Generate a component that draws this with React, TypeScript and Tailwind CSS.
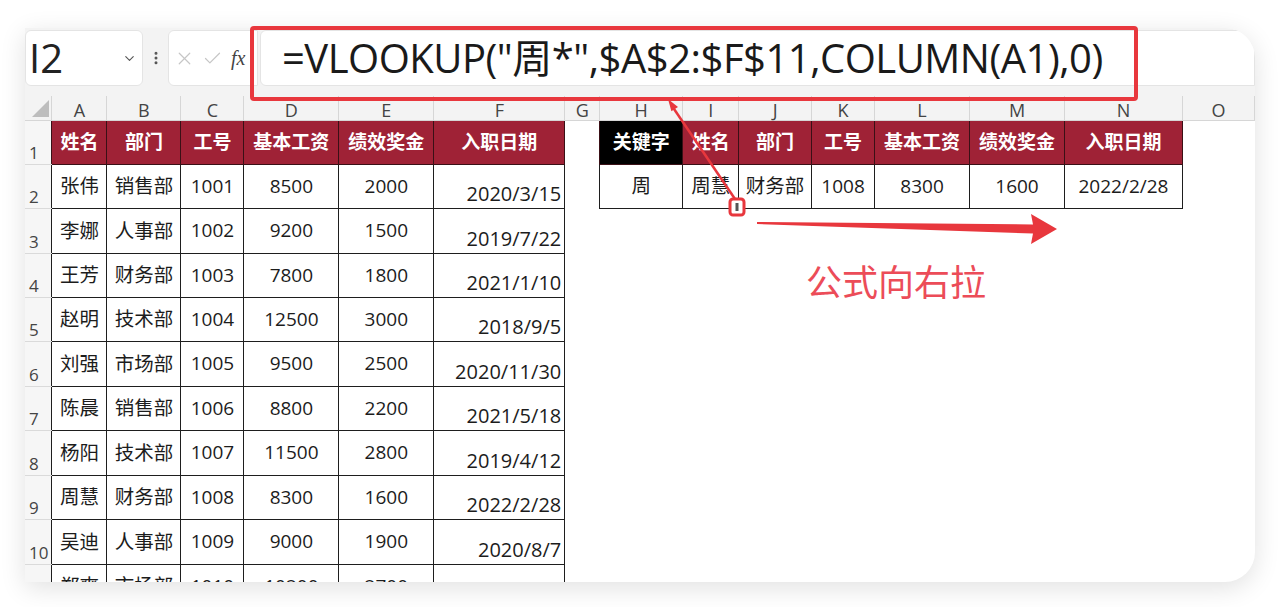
import { ChevronDown, EllipsisVertical, X, Check } from "lucide-react";

const cols = [27, 55, 74, 63, 95, 95, 131, 35, 83, 56, 73, 63, 95, 95, 118, 72];
const letters = ["", "A", "B", "C", "D", "E", "F", "G", "H", "I", "J", "K", "L", "M", "N", "O"];
const heights = [44, 44, 45, 44, 44, 45, 44, 45, 44, 45, 44];

const leftHead = ["姓名", "部门", "工号", "基本工资", "绩效奖金", "入职日期"];
const rightHead = ["关键字", "姓名", "部门", "工号", "基本工资", "绩效奖金", "入职日期"];

const rows = [
  ["张伟", "销售部", "1001", "8500", "2000", "2020/3/15"],
  ["李娜", "人事部", "1002", "9200", "1500", "2019/7/22"],
  ["王芳", "财务部", "1003", "7800", "1800", "2021/1/10"],
  ["赵明", "技术部", "1004", "12500", "3000", "2018/9/5"],
  ["刘强", "市场部", "1005", "9500", "2500", "2020/11/30"],
  ["陈晨", "销售部", "1006", "8800", "2200", "2021/5/18"],
  ["杨阳", "技术部", "1007", "11500", "2800", "2019/4/12"],
  ["周慧", "财务部", "1008", "8300", "1600", "2022/2/28"],
  ["吴迪", "人事部", "1009", "9000", "1900", "2020/8/7"],
  ["郑爽", "市场部", "1010", "10200", "2700", "2019/12/1"],
];

const result = ["周", "周慧", "财务部", "1008", "8300", "1600", "2022/2/28"];

const isNum = (s: string) => /^[\d/]+$/.test(s);

function RowNum({ n }: { n: number }) {
  return (
    <td className="border-b border-[#dadada] bg-[#f6f6f6] pl-[4px] pb-[3px] align-bottom text-[17px] leading-none text-[#444]">
      {n}
    </td>
  );
}

function DataCell({ v, date }: { v: string; date?: boolean }) {
  if (date) {
    return (
      <td className="border border-[#1e1e1e] pr-[3px] pb-[4px] text-right align-bottom text-[20px] leading-none text-[#1c1c1c]">
        {v}
      </td>
    );
  }
  return (
    <td
      className={`border border-[#1e1e1e] text-center align-middle leading-none text-[#1c1c1c] ${
        isNum(v) ? "text-[19px]" : "text-[19.5px]"
      }`}
    >
      {v}
    </td>
  );
}

export default function App() {
  return (
    <div
      className="relative h-[607px] w-[1280px] overflow-hidden bg-white"
      style={{ fontFamily: '"Open Sans", "Noto Sans CJK SC", sans-serif' }}
    >
      <div className="pl-[25px] pt-[28px]">
        <div className="h-[554px] w-[1230px] overflow-hidden rounded-r-[30px] bg-white shadow-[0_6px_26px_rgba(0,0,0,0.12)]">
          {/* formula bar */}
          <div className="flex h-[68px] items-start bg-[#f3f3f3] pt-[2px]">
            <div className="flex h-[56px] w-[118px] items-center rounded-[6px] border border-[#e4e4e4] bg-white pl-[3px] pr-[5px]">
              <span className="text-[40px] leading-none text-[#222]">I2</span>
              <ChevronDown className="ml-auto text-[#555]" size={15} strokeWidth={1.8} />
            </div>
            <div className="flex h-[56px] w-[25px] items-center justify-center">
              <EllipsisVertical className="text-[#555]" size={16} strokeWidth={2.5} />
            </div>
            <div className="flex h-[56px] w-[90px] items-center rounded-l-[6px] border border-[#e4e4e4] bg-white pl-[5px]">
              <X className="text-[#c6c6c6]" size={21} strokeWidth={1.4} />
              <Check className="ml-[7px] text-[#c6c6c6]" size={21} strokeWidth={1.4} />
              <span
                className="ml-[8px] text-[20px] italic leading-none text-[#444]"
                style={{ fontFamily: '"Liberation Serif", serif' }}
              >
                fx
              </span>
            </div>
            <div className="ml-[2px] flex h-[56px] flex-1 items-center rounded-l-[6px] border border-[#e4e4e4] bg-white pl-[21px]">
              <span className="text-[40px] leading-none tracking-[-0.5px] text-[#1a1a1a]">
                =VLOOKUP("周*",$A$2:$F$11,COLUMN(A1),0)
              </span>
            </div>
          </div>

          {/* grid */}
          <table className="table-fixed border-collapse">
            <colgroup>
              {cols.map((w, i) => (
                <col key={i} style={{ width: w }} />
              ))}
            </colgroup>
            <tbody>
              <tr className="h-[24px]">
                {letters.map((l, i) =>
                  i === 0 ? (
                    <td key={i} className="relative border-b border-r border-[#d6d6d6] bg-[#f3f3f3]">
                      <div className="absolute bottom-[3px] right-[2px] h-0 w-0 border-b-[17px] border-l-[17px] border-b-[#bdbdbd] border-l-transparent" />
                    </td>
                  ) : (
                    <td
                      key={i}
                      className="border-b border-r border-[#d6d6d6] bg-[#f3f3f3] text-center align-bottom text-[18px] leading-[20px] text-[#444]"
                    >
                      {l}
                    </td>
                  )
                )}
              </tr>

              {/* header row */}
              <tr style={{ height: heights[0] }}>
                <RowNum n={1} />
                {leftHead.map((h) => (
                  <td
                    key={h}
                    className="border border-[#3a1016] bg-[#9f2236] text-center align-middle text-[19px] font-bold leading-none text-white"
                  >
                    {h}
                  </td>
                ))}
                <td />
                {rightHead.map((h, i) => (
                  <td
                    key={h + i}
                    className={`border border-[#3a1016] text-center align-middle text-[19px] font-bold leading-none text-white ${
                      i === 0 ? "bg-black" : "bg-[#9f2236]"
                    }`}
                  >
                    {h}
                  </td>
                ))}
                <td />
              </tr>

              {rows.map((r, ri) => (
                <tr key={ri} style={{ height: heights[ri + 1] }}>
                  <RowNum n={ri + 2} />
                  {r.map((v, ci) => (
                    <DataCell key={ci} v={v} date={ci === 5} />
                  ))}
                  <td />
                  {ri === 0 ? (
                    result.map((v, ci) => (
                      <td
                        key={ci}
                        className={`border border-[#1e1e1e] text-center align-middle leading-none text-[#1c1c1c] ${
                          isNum(v) ? "text-[19px]" : "text-[19.5px]"
                        }`}
                      >
                        {v}
                      </td>
                    ))
                  ) : (
                    <>
                      <td />
                      <td />
                      <td />
                      <td />
                      <td />
                      <td />
                      <td />
                    </>
                  )}
                  <td />
                </tr>
              ))}
            </tbody>
          </table>
        </div>
      </div>

      {/* highlight round the formula */}
      <div className="pointer-events-none absolute left-[250px] top-[26px] h-[75px] w-[888px] rounded-[4px] border-[4px] border-[#e8373d]" />

      {/* arrows */}
      <svg className="pointer-events-none absolute left-0 top-0" width="1280" height="607" viewBox="0 0 1280 607">
        <line x1="735" y1="199" x2="672" y2="106" stroke="#e8373d" strokeWidth="2.5" />
        <polygon points="668,99 678,107 671.4,111.2" fill="#e8373d" />
        <rect x="730" y="199" width="14" height="16" rx="3" fill="white" stroke="#e8373d" strokeWidth="3" />
        <rect x="735.5" y="203" width="3" height="8" fill="#555" />
        <polygon points="757,222 1033,224.5 1031,214 1057,229 1031,244 1033,233.5 757,224" fill="#e8373d" />
      </svg>

      <div className="absolute left-[806px] top-[262px] text-[36px] leading-none text-[#ec4c58]" style={{ fontFamily: '"Noto Sans CJK SC", sans-serif' }}>
        公式向右拉
      </div>
    </div>
  );
}
